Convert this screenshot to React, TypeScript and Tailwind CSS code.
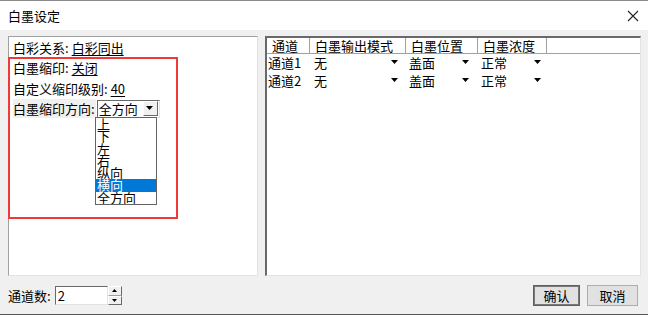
import React from 'react';

const FONT = "font-['SimSun','Noto_Sans_CJK_SC',sans-serif]";

const Arrow = () => (
    <svg width="8" height="5" viewBox="0 0 8 5" className="inline-block">
        <path d="M0 0 L7 0 L3.5 4 Z" fill="#000" />
    </svg>
);

const headers = [
    { label: '通道', w: 'w-[43px]' },
    { label: '白墨输出模式', w: 'w-[96px]' },
    { label: '白墨位置', w: 'w-[72px]' },
    { label: '白墨浓度', w: 'w-[69px]' },
];

const rows = [
    { ch: '通道1', mode: '无', pos: '盖面', den: '正常' },
    { ch: '通道2', mode: '无', pos: '盖面', den: '正常' },
];

const options = ['上', '下', '左', '右', '纵向', '横向', '全方向'];

export default function App() {
    return (
        <div className={`w-[648px] h-[315px] bg-[#f0f0f0] flex flex-col text-[13px] text-black border-t border-[#8a8a8a] border-b border-b-[#555] ${FONT}`}>
            {/* Title bar */}
            <div className="h-[29px] bg-white flex items-center justify-between pl-[8px] pr-[9px]">
                <span className="text-[13px]">白墨设定</span>
                <svg width="12" height="12" viewBox="0 0 12 12">
                    <path d="M1 1 L11 11 M11 1 L1 11" stroke="#222" strokeWidth="1.1" />
                </svg>
            </div>

            {/* Panels */}
            <div className="flex gap-[7px] pl-[8px] pt-[6px]">
                {/* Left panel */}
                <div className="relative w-[250px] h-[240px] bg-white border border-t-[#a0a0a0] border-l-[#a0a0a0] border-r-[#e3e3e3] border-b-[#e3e3e3]">
                    <div className="flex flex-col pl-[4px]">
                        <div className="h-[20.5px] flex items-center">
                            白彩关系: <span className="ml-[3px] underline underline-offset-2">白彩同出</span>
                        </div>
                        <div className="h-[20.5px] flex items-center">
                            白墨缩印: <span className="ml-[3px] underline underline-offset-2">关闭</span>
                        </div>
                        <div className="h-[20.5px] flex items-center">
                            自定义缩印级别: <span className="ml-[3px] underline underline-offset-2">40</span>
                        </div>
                        <div className="h-[20.5px] flex items-center">
                            <span className="bg-[#f0f0f0] pr-[1px] h-[19px] flex items-center">白墨缩印方向:</span>
                            <div className="ml-[1px] w-[63px] h-[18px] flex items-center bg-white border border-t-[#696969] border-l-[#696969] border-r-[#e3e3e3] border-b-[#e3e3e3]">
                                <span className="flex-1 pl-[1px] leading-none">全方向</span>
                                <div className="w-[15px] h-[15px] mr-[1px] bg-[#f0f0f0] flex items-center justify-center border border-t-white border-l-white border-r-[#696969] border-b-[#696969]">
                                    <Arrow />
                                </div>
                            </div>
                        </div>
                    </div>

                    {/* Dropdown list */}
                    <div className="absolute left-[86px] top-[80px] w-[62px] h-[88px] bg-white border border-[#646464] flex flex-col overflow-hidden">
                        {options.map((o, i) => (
                            <div
                                key={o}
                                className={`h-[12.3px] leading-[12px] pl-[1px] overflow-visible whitespace-nowrap ${i === 5 ? 'bg-[#0078d7] text-white' : ''}`}
                            >
                                {o}
                            </div>
                        ))}
                    </div>

                    {/* Red highlight */}
                    <div className="absolute left-[-1px] top-[20px] w-[170px] h-[162px] border-2 border-[#f0393a] pointer-events-none" />
                </div>

                {/* Right panel */}
                <div className="w-[376px] h-[240px] bg-white border border-t-[#696969] border-l-[#696969] border-r-[#e3e3e3] border-b-[#e3e3e3] border-t-2 border-l-2">
                    <div className="flex h-[16px] border-b border-[#a0a0a0]">
                        {headers.map((h) => (
                            <div key={h.label} className={`${h.w} h-full flex items-center border-r border-[#a0a0a0] pl-[5px] leading-none`}>
                                {h.label}
                            </div>
                        ))}
                        <div className="flex-1" />
                    </div>
                    {rows.map((r) => (
                        <div key={r.ch} className="flex h-[17.5px] items-center leading-none">
                            <div className="w-[43px] pl-[1px] whitespace-nowrap">{r.ch}</div>
                            <div className="w-[96px] pl-[4px] flex items-center justify-between pr-[7px]">
                                <span>{r.mode}</span>
                                <Arrow />
                            </div>
                            <div className="w-[72px] pl-[3px] flex items-center justify-between pr-[8px]">
                                <span>{r.pos}</span>
                                <Arrow />
                            </div>
                            <div className="w-[69px] pl-[3px] flex items-center justify-between pr-[5px]">
                                <span>{r.den}</span>
                                <Arrow />
                            </div>
                        </div>
                    ))}
                </div>
            </div>

            {/* Bottom bar */}
            <div className="flex items-center justify-between pl-[8px] pr-[10px] mt-[9px]">
                <div className="flex items-center">
                    <span>通道数:</span>
                    <div className="ml-[4px] w-[53px] h-[19px] bg-white flex items-center pl-[2px] border border-t-[#696969] border-l-[#696969] border-r-[#e3e3e3] border-b-[#e3e3e3] leading-none">
                        2
                    </div>
                    <div className="flex flex-col w-[14px] h-[19px]">
                        <div className="flex-1 bg-[#f0f0f0] border border-t-white border-l-white border-r-[#696969] border-b-[#a0a0a0] flex items-center justify-center">
                            <svg width="5" height="3" viewBox="0 0 5 3"><path d="M2.5 0 L5 3 L0 3 Z" fill="#000" /></svg>
                        </div>
                        <div className="flex-1 bg-[#f0f0f0] border border-t-white border-l-white border-r-[#696969] border-b-[#696969] flex items-center justify-center">
                            <svg width="5" height="3" viewBox="0 0 5 3"><path d="M0 0 L5 0 L2.5 3 Z" fill="#000" /></svg>
                        </div>
                    </div>
                </div>
                <div className="flex gap-[7px]">
                    <div className="w-[47px] h-[21px] bg-[#e1e1e1] border border-[#0078d7] outline outline-1 outline-[#7a7a7a] -outline-offset-2 flex items-center justify-center">
                        确认
                    </div>
                    <div className="w-[51px] h-[21px] bg-[#e1e1e1] border border-[#adadad] flex items-center justify-center">
                        取消
                    </div>
                </div>
            </div>
        </div>
    );
}
